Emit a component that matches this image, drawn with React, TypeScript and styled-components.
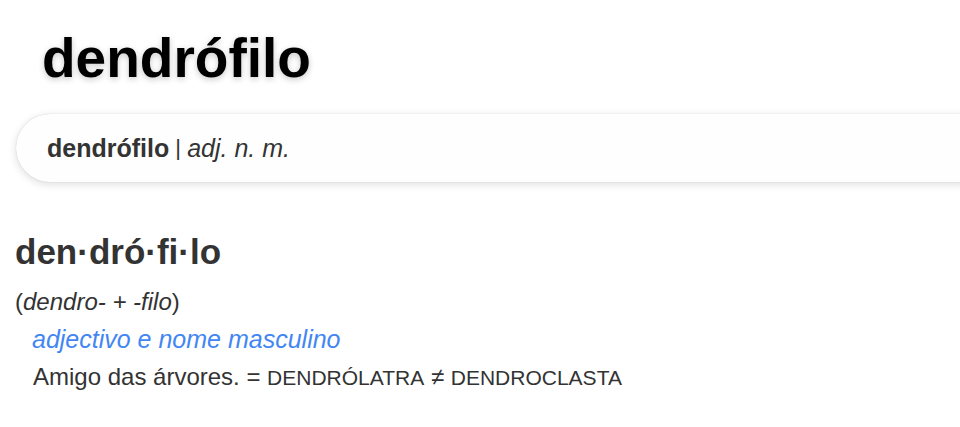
import styled, { createGlobalStyle } from "styled-components";

const GlobalStyle = createGlobalStyle`
  html, body {
    margin: 0;
    padding: 0;
    background: #ffffff;
    overflow: hidden;
  }
  body {
    font-family: "Liberation Sans", Arial, sans-serif;
    color: #333333;
  }
`;

const Page = styled.div`
  width: 960px;
  height: 427px;
  overflow: hidden;
  display: flex;
  flex-direction: column;
`;

const Title = styled.h1`
  margin: 26px 0 0 42px;
  font-size: 55px;
  line-height: 64px;
  font-weight: 700;
  color: #000000;
  text-shadow: 0 2px 6px rgba(0, 0, 0, 0.22);
`;

const HeadCard = styled.div`
  margin: 24px -60px 0 16px;
  height: 68px;
  border-radius: 34px;
  background: #fefefe;
  box-shadow: 0 2px 8px rgba(0, 0, 0, 0.14), 0 0 1px rgba(0, 0, 0, 0.2);
  display: flex;
  align-items: center;
  padding: 0 31px;
  font-size: 25px;
  color: #333333;
  white-space: pre;
`;

const HeadWord = styled.b`
  font-weight: 700;
`;

const Sep = styled.span`
  font-size: 22px;
  font-weight: 400;
`;

const Gram = styled.i`
  font-style: italic;
`;

const Entry = styled.div`
  margin: 49px 0 0 15px;
  display: flex;
  flex-direction: column;
`;

const Syllables = styled.div`
  font-size: 35px;
  font-weight: 700;
  line-height: 42px;
  color: #333333;
`;

const Etym = styled.div`
  margin-top: 15px;
  font-size: 24px;
  line-height: 28px;
`;

const Category = styled.div`
  margin: 8px 0 0 17px;
  font-size: 25px;
  line-height: 30px;
  font-style: italic;
  color: #4286f4;
`;

const Definition = styled.div`
  margin: 9px 0 0 18px;
  font-size: 24px;
  line-height: 28px;
  white-space: pre;
`;

const Xref = styled.span`
  font-size: 21px;
`;

export default function App() {
  return (
    <Page>
      <GlobalStyle />
      <Title>dendrófilo</Title>
      <HeadCard>
        <HeadWord>dendrófilo</HeadWord>
        <Sep> | </Sep>
        <Gram>adj. n. m.</Gram>
      </HeadCard>
      <Entry>
        <Syllables>den·dró·fi·lo</Syllables>
        <Etym>
          (<i>dendro- + -filo</i>)
        </Etym>
        <Category>adjectivo e nome masculino</Category>
        <Definition>
          {"Amigo das árvores. = "}
          <Xref>DENDRÓLATRA</Xref>
          {" ≠ "}
          <Xref>DENDROCLASTA</Xref>
        </Definition>
      </Entry>
    </Page>
  );
}
